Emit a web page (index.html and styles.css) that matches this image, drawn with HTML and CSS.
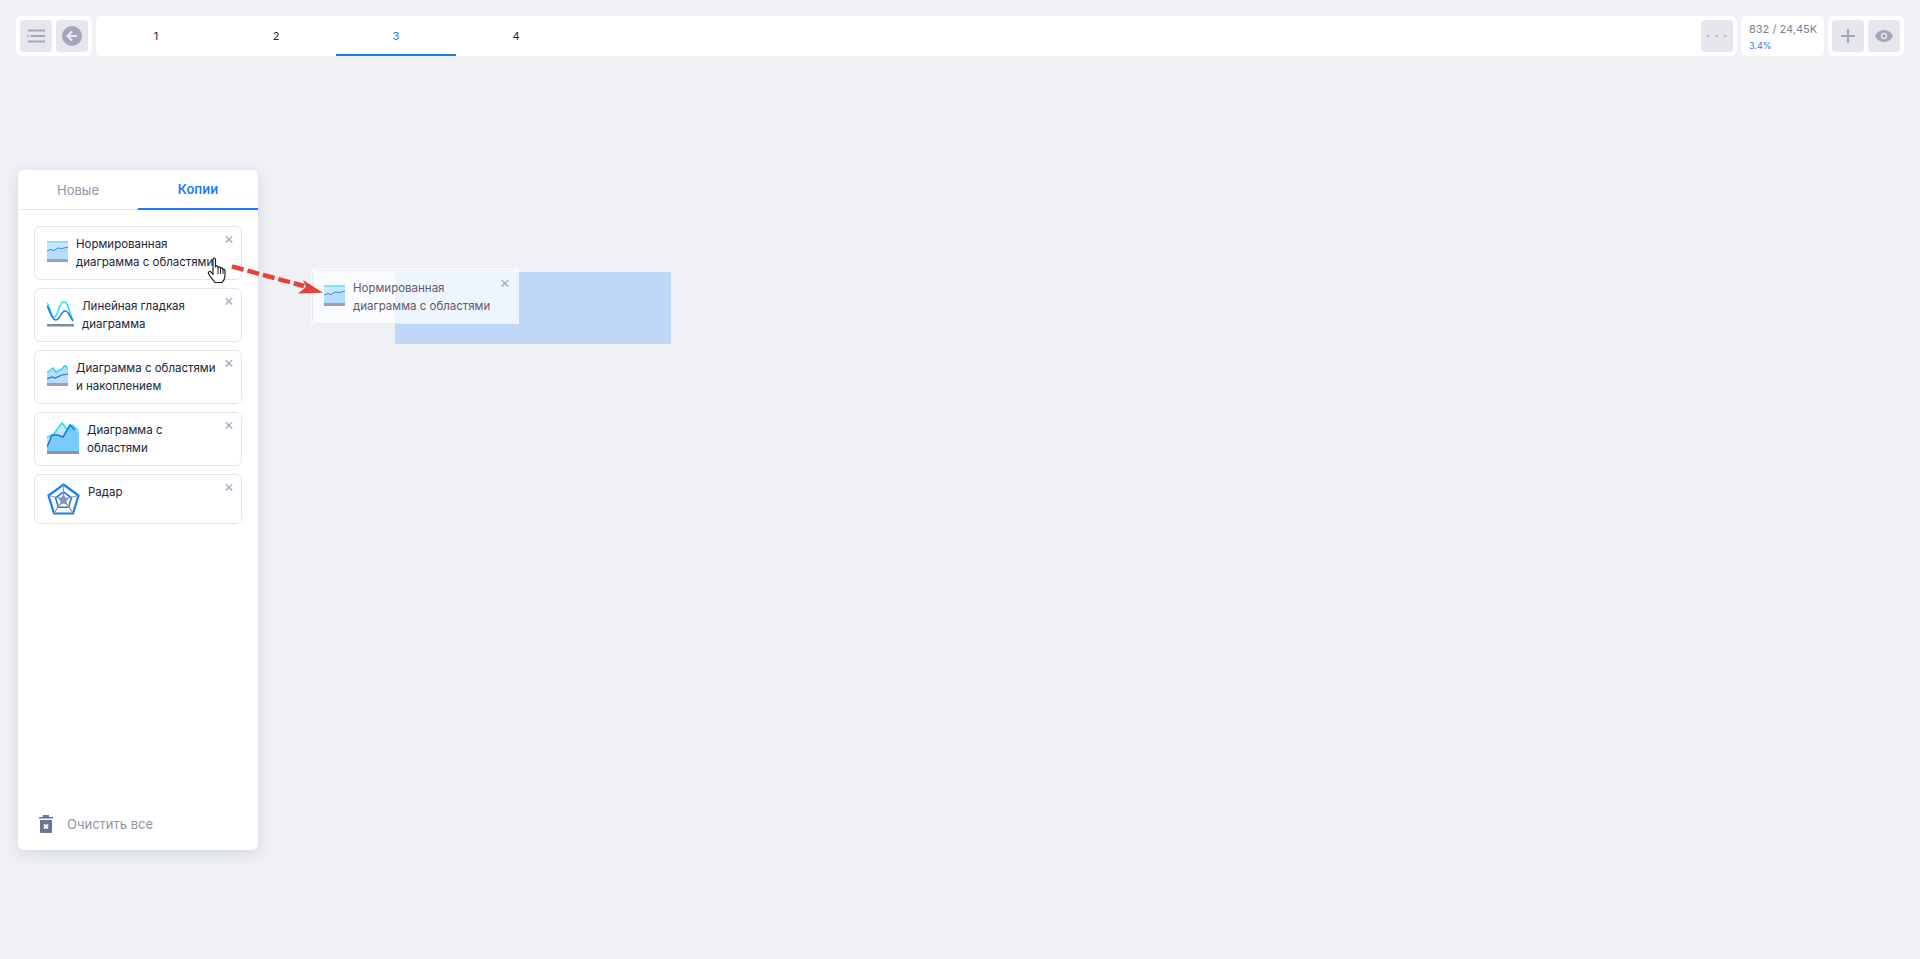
FILE: index.html
```html
<!DOCTYPE html>
<html lang="ru">
<head>
    <meta charset="UTF-8">
    <meta name="viewport" content="width=device-width, initial-scale=1.0">
    <title>Report</title>
    <link rel="stylesheet" href="styles.css">
</head>
<body>
    <header class="topbar">
        <div class="group">
            <button class="tool">
                <svg width="18" height="14" viewBox="0 0 18 14"><path d="M1 1.500h17M0 7h1.500M3.500 7H18M1 12.500h17" stroke="#a3a7bd" stroke-width="2"/></svg>
            </button>
            <button class="tool">
                <svg width="20" height="20" viewBox="0 0 20 20"><circle cx="10" cy="10" r="10" fill="#a3a7bd"/><path d="M15 10H6M10 5.500 5.500 10l4.500 4.500" fill="none" stroke="#eceef2" stroke-width="2"/></svg>
            </button>
        </div>
        <nav class="tabs">
            <a class="tab">1</a>
            <a class="tab">2</a>
            <a class="tab active">3</a>
            <a class="tab">4</a>
            <button class="tool more"><svg width="20" height="4" viewBox="0 0 20 4"><path d="M0 2h2.500M8.500 2H11M17 2h2.500" stroke="#b4b7c8" stroke-width="2"/></svg></button>
        </nav>
        <div class="stats">
            <div class="stats-count">832 / 24,45K</div>
            <div class="stats-pct">3.4%</div>
        </div>
        <div class="group">
            <button class="tool">
                <svg width="16" height="16" viewBox="0 0 16 16"><path d="M8 1v14M1 8h14" stroke="#a3a7bd" stroke-width="2"/></svg>
            </button>
            <button class="tool">
                <svg width="18" height="12" viewBox="0 0 18 12"><path d="M9 0C5 0 1.700 2.500 0 6c1.700 3.500 5 6 9 6s7.300-2.500 9-6c-1.700-3.500-5-6-9-6z" fill="#a3a7bd"/><circle cx="9" cy="6" r="3.200" fill="#e6e7ec"/><circle cx="9" cy="6" r="1.800" fill="#a3a7bd"/></svg>
            </button>
        </div>
    </header>

    <aside class="panel">
        <div class="panel-tabs">
            <a class="panel-tab">Новые</a>
            <a class="panel-tab active">Копии</a>
        </div>
        <div class="cards">
            <div class="card">
                <svg class="icon icon-small" width="21" height="21" viewBox="0 0 21 21"><rect width="21" height="19" fill="#c9e7fc"/><rect width="21" height="2" fill="#8fdcfb"/><path d="M0 10l4-1.500 3 1 4-2.500 4 .5 6-1.500V18H0z" fill="#b5dcfb"/><path d="M0 10l4-1.500 3 1 4-2.500 4 .5 6-1.500" fill="none" stroke="#2b8ee8"/><rect y="18" width="21" height="3" fill="#9a9eb8"/></svg>
                <span class="card-text">Нормированная<br>диаграмма с областями</span>
                <span class="close">×</span>
            </div>
            <div class="card">
                <svg class="icon icon-line" width="27" height="27" viewBox="0 0 27 27"><path d="M0 3c3 3 4 14 7 14 5 0 4-15 10-15 5 0 5 12 9 18" fill="none" stroke="#1be0ff" stroke-width="1.500"/><path d="M0 6c3 4 4 14 9 14 4 0 5-9 9-9 4 0 5 6 8 10" fill="none" stroke="#1a74e8" stroke-width="1.500"/><rect y="24" width="27" height="2.500" fill="#8388a8"/></svg>
                <span class="card-text">Линейная гладкая<br>диаграмма</span>
                <span class="close">×</span>
            </div>
            <div class="card">
                <svg class="icon icon-small" width="21" height="21" viewBox="0 0 21 21"><path d="M0 9l6-5 3 3 6-3 3-3 3 3v16H0z" fill="#b8dcfb"/><path d="M0 8l6-5 3 4 6-3 3-4 3 4" fill="none" stroke="#22d8fb" stroke-width="1.500"/><path d="M0 14l5-2 3 1 7-3 6-1" fill="none" stroke="#1a74e8" stroke-width="1.200"/><rect y="18" width="21" height="3" fill="#9a9eb8"/></svg>
                <span class="card-text">Диаграмма с областями<br>и накоплением</span>
                <span class="close">×</span>
            </div>
            <div class="card">
                <svg class="icon icon-area" width="32" height="32" viewBox="0 0 32 32"><path d="M0 15l6-2 9-12 6 7 4-5 7 5v21H0z" fill="#c4e6fc"/><path d="M0 25l5-12 6 0 5 2 7-12 5 5 4 2v19H0z" fill="#7bcbfa"/><path d="M0 15l6-2 9-12 6 7 4-5 6 5" fill="none" stroke="#19e0ff" stroke-width="1.500"/><path d="M0 25l5-12 6 0 5 2 7-12 5 5" fill="none" stroke="#1a74e8" stroke-width="1.500"/><rect y="29" width="32" height="3" fill="#8e92ae"/></svg>
                <span class="card-text">Диаграмма с<br>областями</span>
                <span class="close">×</span>
            </div>
            <div class="card card-short">
                <svg class="icon icon-radar" width="33" height="32" viewBox="0 0 33 32"><path d="M16.500 1.500 31.500 12.500 26 30.500H7L1.500 12.500z" fill="none" stroke="#1a7fe8" stroke-width="2.200"/><path d="M16.500 9l8 5.800-3 9.400h-10l-3-9.400z" fill="none" stroke="#1a7fe8" stroke-width="1.600"/><path d="M16.500 2v14M1.500 12.500l15 3.500 15-3.500M7 30l9.500-14L26 30" fill="none" stroke="#8e92ae" stroke-width="1.200"/><path d="M16.500 11l2 3.500 3.500.8-2.500 3 .6 3.700-3.600-1.600-3.600 1.600.6-3.700-2.500-3 3.500-.8z" fill="#8e92ae"/></svg>
                <span class="card-text">Радар</span>
                <span class="close">×</span>
            </div>
        </div>
        <div class="clear">
            <svg width="14" height="18" viewBox="0 0 14 18"><path d="M0 2h14v1.500H0zM4 0h6v2H4zM1 5h12v12a1 1 0 0 1-1 1H2a1 1 0 0 1-1-1z" fill="#6d7596"/><path d="M5 9.500l4 4M9 9.500l-4 4" stroke="#fff" stroke-width="1.800"/></svg>
            <span>Очистить все</span>
        </div>
    </aside>

    <div class="drop-zone"></div>
    <div class="ghost">
        <div class="card">
            <svg class="icon icon-small" width="21" height="21" viewBox="0 0 21 21"><rect width="21" height="19" fill="#c9e7fc"/><rect width="21" height="2" fill="#8fdcfb"/><path d="M0 10l4-1.500 3 1 4-2.500 4 .5 6-1.500V18H0z" fill="#b5dcfb"/><path d="M0 10l4-1.500 3 1 4-2.500 4 .5 6-1.500" fill="none" stroke="#2b8ee8"/><rect y="18" width="21" height="3" fill="#9a9eb8"/></svg>
            <span class="card-text">Нормированная<br>диаграмма с областями</span>
            <span class="close">×</span>
        </div>
    </div>

    <svg class="arrow" width="110" height="50" viewBox="0 0 110 50">
        <path d="M2 4.500 74 24" fill="none" stroke="#e8403a" stroke-width="4.500" stroke-dasharray="12 4"/>
        <path d="M73 18 93 30.700 68 31.500 76 25z" fill="#e8403a"/>
    </svg>
    <svg class="hand" width="20" height="26" viewBox="0 0 20 26">
        <path d="M6 2.500c0-2 2.500-2 2.500 0V10c0-1.500 2.500-1.500 2.500 0v1c0-1.500 2.500-1.500 2.500 0v1c0-1.500 2.500-1.500 2.500 0v1c0-1 2-1 2 .5V19c0 3-1.500 5-3 6.500H8C6.500 23 3 20 1.500 16.500c-.7-1.700 1.300-2.700 2.500-1.500l2 2.500z" fill="#fff" stroke="#222" stroke-width="1.200" stroke-linejoin="round"/>
        <path d="M11 11v6M13.500 12v5M16 13v4" stroke="#222" stroke-width="1"/>
    </svg>
</body>
</html>
```

FILE: styles.css
```css
* {
    box-sizing: border-box;
}

body {
    margin: 0;
    height: 959px;
    overflow: hidden;
    background-color: #eff1f5;
    font-family: Inter, "Noto Sans", sans-serif;
    color: #22263a;
}

button {
    font: inherit;
    cursor: pointer;
}

.topbar {
    display: flex;
    gap: 4px;
    height: 40px;
    margin: 16px 16px 0;
}

.group {
    display: flex;
    gap: 4px;
    padding: 4px;
    background-color: #fff;
    border-radius: 6px;
}

.tool {
    display: flex;
    align-items: center;
    justify-content: center;
    width: 32px;
    height: 32px;
    padding: 0;
    border: none;
    border-radius: 4px;
    background-color: #e6e7ec;
}

.tabs {
    flex: 1;
    display: flex;
    align-items: stretch;
    padding-right: 4px;
    background-color: #fff;
    border-radius: 6px;
}

.tab {
    display: flex;
    align-items: center;
    justify-content: center;
    width: 120px;
    font-size: 11px;
}

.tab.active {
    color: #1a7bf2;
    box-shadow: inset 0 -2px 0 #1a7bf2;
}

.more {
    margin: 4px 0 4px auto;
}

.stats {
    width: 83px;
    padding: 5px 8px;
    background-color: #fff;
    border-radius: 6px;
}

.stats-count {
    font-size: 11px;
    line-height: 16px;
    color: #7a8099;
    white-space: nowrap;
}

.stats-pct {
    margin-top: 2px;
    font-size: 9px;
    line-height: 14px;
    color: #2f7cf0;
}

.panel {
    position: absolute;
    left: 18px;
    top: 170px;
    display: flex;
    flex-direction: column;
    width: 240px;
    height: 680px;
    background-color: #fff;
    border-radius: 6px;
    box-shadow: 0 4px 14px rgba(60, 66, 100, 0.14);
}

.panel-tabs {
    display: flex;
    height: 40px;
    border-bottom: 1px solid #e6e8ee;
}

.panel-tab {
    display: flex;
    align-items: center;
    justify-content: center;
    width: 120px;
    height: 40px;
    font-size: 13px;
    color: #8f94a8;
}

.panel-tab.active {
    font-weight: 600;
    color: #1a7bf2;
    border-bottom: 2px solid #1a7bf2;
}

.cards {
    flex: 1;
    display: flex;
    flex-direction: column;
    gap: 8px;
    padding: 16px 16px 0;
}

.card {
    position: relative;
    display: flex;
    align-items: flex-start;
    gap: 8px;
    height: 54px;
    padding: 8px 12px;
    background-color: #fff;
    border: 1px solid #e4e6ec;
    border-radius: 6px;
}

.card-short {
    height: 50px;
}

.icon {
    flex: none;
}

.icon-small {
    margin-top: 6px;
}

.icon-line {
    margin-top: 3px;
}

.icon-area {
    margin-top: 1px;
}

.card-text {
    font-size: 11.500px;
    line-height: 18px;
    white-space: nowrap;
}

.close {
    position: absolute;
    top: 4px;
    right: 7px;
    font-size: 16px;
    line-height: 14px;
    color: #a6abc0;
}

.clear {
    display: flex;
    align-items: center;
    gap: 14px;
    padding: 0 21px 17px;
    font-size: 13px;
    color: #8f94a8;
}

.drop-zone {
    position: absolute;
    left: 395px;
    top: 272px;
    width: 276px;
    height: 72px;
    background-color: #bfd8f7;
}

.ghost {
    position: absolute;
    left: 311px;
    top: 269px;
    width: 208px;
    height: 55px;
    padding: 1px 1px 0 1px;
    background-color: rgba(255, 255, 255, 0.75);
}

.ghost .card {
    padding-left: 11px;
    background-color: transparent;
    border-color: #e9ebf0;
}

.ghost .card-text {
    color: #5f5a70;
}

.arrow {
    position: absolute;
    left: 230px;
    top: 262px;
}

.hand {
    position: absolute;
    left: 207px;
    top: 257px;
}
```
